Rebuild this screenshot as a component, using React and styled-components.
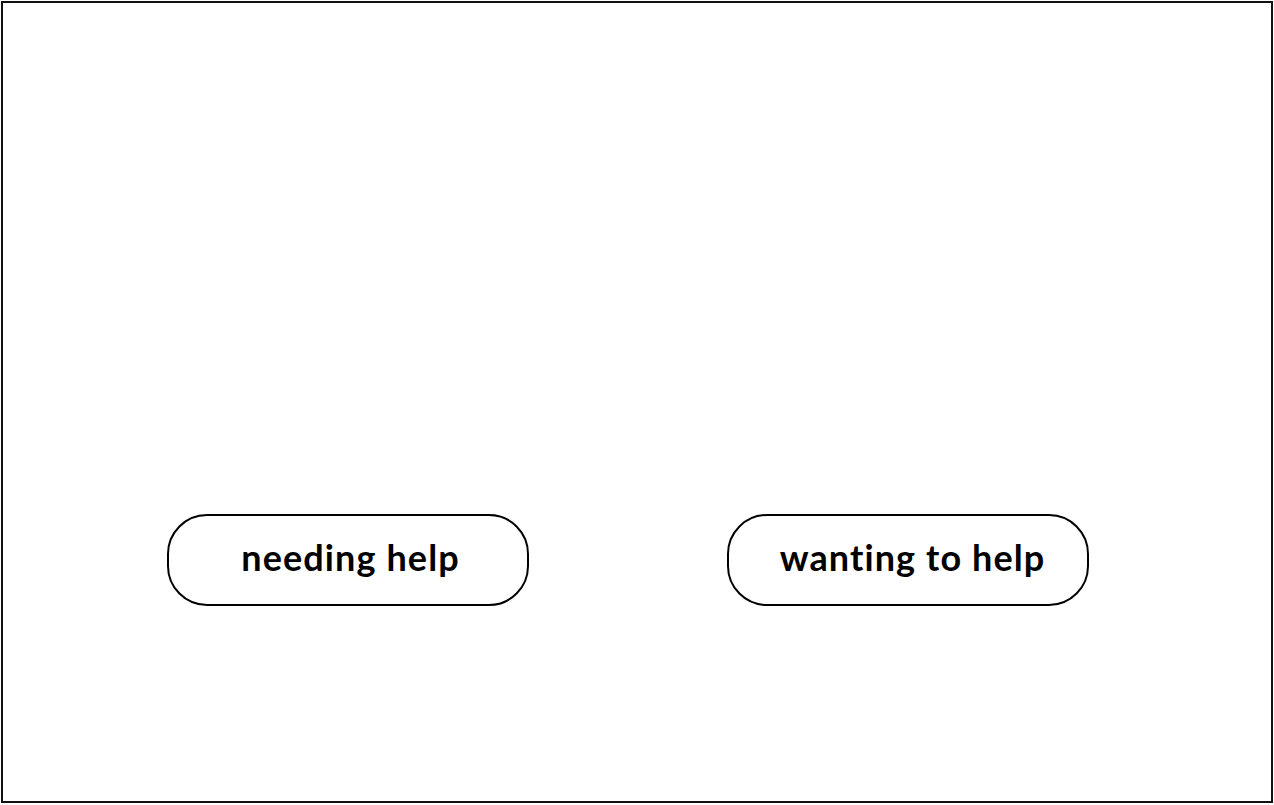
import React from "react";
import styled, { createGlobalStyle } from "styled-components";

const GlobalStyle = createGlobalStyle`
  html, body {
    margin: 0;
    padding: 0;
    background: #fff;
  }
  body {
    font-family: "Lato", "Liberation Sans", sans-serif;
  }
`;

const Frame = styled.div`
  box-sizing: border-box;
  margin: 1px 0 0 1px;
  width: 1272px;
  height: 802px;
  border: 2px solid #111;
  display: flex;
  flex-direction: column;
  justify-content: flex-end;
  padding: 0 0 195px 164px;
`;

const ButtonRow = styled.div`
  display: flex;
  gap: 198px;
`;

const PillButton = styled.button`
  box-sizing: border-box;
  width: 362px;
  height: 92px;
  border: 2px solid #000;
  border-radius: 40px;
  background: #fff;
  color: #000;
  font-family: "Lato", "Liberation Sans", sans-serif;
  font-weight: 700;
  font-size: 36px;
  letter-spacing: 1.1px;
  padding: 0 0 6px ${(p) => p.$shift || 0}px;
  cursor: pointer;
`;

export default function App() {
  return (
    <>
      <GlobalStyle />
      <Frame>
        <ButtonRow>
          <PillButton $shift={5}>needing help</PillButton>
          <PillButton $shift={9}>wanting to help</PillButton>
        </ButtonRow>
      </Frame>
    </>
  );
}
